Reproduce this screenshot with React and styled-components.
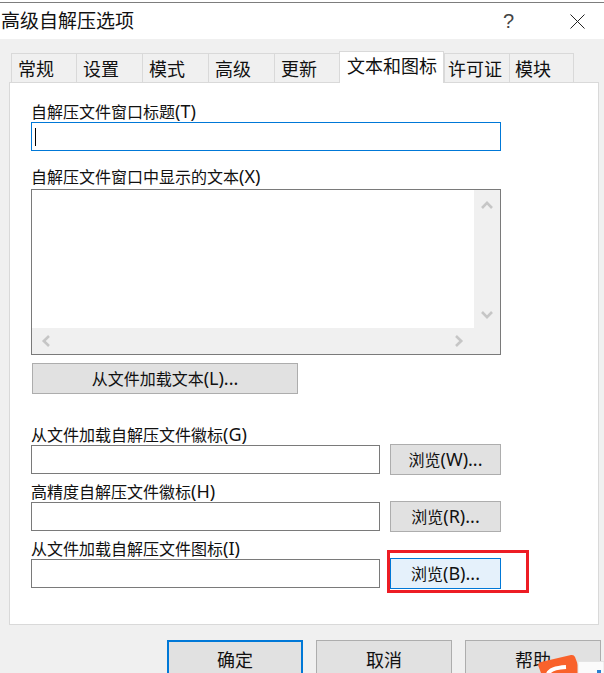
import React from "react";
import styled, { createGlobalStyle } from "styled-components";

const GlobalStyle = createGlobalStyle`
  html, body {
    margin: 0;
    padding: 0;
    background: #f0f0f0;
  }
  * {
    box-sizing: border-box;
  }
`;

const FONT = `"Noto Sans", "Noto Sans CJK SC", sans-serif`;

const Dialog = styled.div`
  position: relative;
  width: 604px;
  height: 673px;
  overflow: hidden;
  background: #f0f0f0;
  font-family: ${FONT};
  color: #111;
`;

const TopEdge = styled.div`
  height: 3px;
  background: #fff;
  border-bottom: 1px solid #7d7d7d;
`;

const TitleBar = styled.div`
  display: flex;
  align-items: center;
  height: 36px;
  padding: 0 19px 0 1px;
  background: #fff;
`;

const Title = styled.div`
  flex: 1;
  font-size: 19px;
  line-height: 36px;
`;

const HelpMark = styled.div`
  width: 67px;
  font-family: "Liberation Sans", sans-serif;
  font-size: 20px;
  line-height: 36px;
  color: #444;
  text-align: left;
`;

const TabStrip = styled.div`
  display: flex;
  align-items: flex-end;
  height: 31px;
  margin: 12px 0 0 11px;
`;

const Tab = styled.div`
  position: relative;
  width: ${(p) => p.$w}px;
  height: ${(p) => (p.$active ? 32 : 29)}px;
  margin-bottom: ${(p) => (p.$active ? -1 : 0)}px;
  padding-left: ${(p) => p.$pad}px;
  border: 1px solid #d9d9d9;
  border-width: 1px 0 0 1px;
  border-right-width: ${(p) => (p.$active || p.$last ? 1 : 0)}px;
  background: ${(p) => (p.$active ? "#fff" : "#f0f0f0")};
  font-size: 18px;
  line-height: ${(p) => (p.$active ? 29 : 31)}px;
  white-space: nowrap;
  z-index: ${(p) => (p.$active ? 1 : 0)};
`;

const Panel = styled.div`
  width: 590px;
  height: 543px;
  margin-left: 9px;
  padding: 19px 0 0 21px;
  background: #fff;
  border: 1px solid #d9d9d9;
`;

const Label = styled.div`
  height: 20px;
  font-size: 16px;
  line-height: 20px;
  white-space: nowrap;
`;

/* latin part of a caption renders larger than the CJK next to it */
const Key = styled.span`
  font-size: 18px;
  line-height: 1;
`;

const FileLabel = styled(Label)`
  height: 26px;
  padding-top: 7px;
  line-height: 19px;
`;

const TextBox = styled.div`
  display: flex;
  align-items: center;
  width: ${(p) => p.$w}px;
  height: 29px;
  padding-left: 3px;
  background: #fff;
  border: 1px solid ${(p) => (p.$focused ? "#0078d7" : "#7a7a7a")};
`;

const Caret = styled.span`
  width: 1px;
  height: 18px;
  background: #000;
`;

const MemoLabel = styled(Label)`
  margin-top: 16px;
  height: 22px;
`;

const Memo = styled.div`
  display: grid;
  grid-template-columns: 1fr 26px;
  grid-template-rows: 1fr 26px;
  width: 470px;
  height: 166px;
  border: 1px solid #7a7a7a;
  background: #fff;
`;

const MemoText = styled.div`
  background: #fff;
`;

const ScrollTrack = styled.div`
  display: flex;
  flex-direction: ${(p) => (p.$vertical ? "column" : "row")};
  justify-content: space-between;
  align-items: center;
  padding: ${(p) => (p.$vertical ? "9px 0 7px" : "0 9px 1px 8px")};
  background: #f0f0f0;
`;

const Corner = styled.div`
  background: #f0f0f0;
`;

const Button = styled.button`
  display: block;
  padding: 0 0 1px;
  font-family: ${FONT};
  font-size: ${(p) => (p.$large ? 18 : 16)}px;
  color: #111;
  background: ${(p) => (p.$hover ? "#e5f1fb" : "#e1e1e1")};
  border: ${(p) => (p.$default ? 2 : 1)}px solid
    ${(p) => (p.$hover || p.$default ? "#0078d7" : "#adadad")};
  border-radius: 0;
  white-space: nowrap;
`;

const LoadButton = styled(Button)`
  width: 266px;
  height: 31px;
  margin: 8px 0 24px 1px;
`;

const BrowseRow = styled.div`
  display: flex;
  align-items: center;
  gap: 10px;
  height: 31px;
`;

const BrowseButton = styled(Button)`
  width: 111px;
  height: 31px;
`;

const BrowseSlot = styled.div`
  position: relative;
`;

const Highlight = styled.div`
  position: absolute;
  left: -3px;
  top: -8px;
  width: 142px;
  height: 43px;
  border: 3px solid #ed1c24;
  pointer-events: none;
`;

const Footer = styled.div`
  display: flex;
  justify-content: flex-end;
  gap: 13px;
  padding: 15px 3px 0 0;
`;

const FooterButton = styled(Button)`
  width: 136px;
  height: 39px;
`;

const ImeBadge = styled.svg`
  position: absolute;
  right: 0;
  bottom: 0;
`;

const ROTATE = { up: 0, right: 90, down: 180, left: 270 };

function Arrow({ dir }) {
  return (
    <svg
      width="12"
      height="12"
      viewBox="0 0 12 12"
      style={{ transform: `rotate(${ROTATE[dir]}deg)` }}
    >
      <path d="M1 9 L6 3.8 L11 9" fill="none" stroke="#c6c6c6" strokeWidth="2.6" />
    </svg>
  );
}

const TABS = [
  { text: "常规", w: 65, pad: 6 },
  { text: "设置", w: 66, pad: 6 },
  { text: "模式", w: 66, pad: 6 },
  { text: "高级", w: 66, pad: 6 },
  { text: "更新", w: 65, pad: 6 },
  { text: "文本和图标", w: 105, pad: 7, active: true },
  { text: "许可证", w: 65, pad: 3 },
  { text: "模块", w: 65, pad: 5, last: true },
];

export default function App() {
  return (
    <>
      <GlobalStyle />
      <Dialog>
        <TopEdge />
        <TitleBar>
          <Title>高级自解压选项</Title>
          <HelpMark>?</HelpMark>
          <svg width="15" height="15" viewBox="0 0 15 15">
            <path d="M0.5 0.5 L14.5 14.5 M14.5 0.5 L0.5 14.5" stroke="#222" strokeWidth="1" />
          </svg>
        </TitleBar>

        <TabStrip>
          {TABS.map((t) => (
            <Tab key={t.text} $w={t.w} $pad={t.pad} $active={t.active} $last={t.last}>
              {t.text}
            </Tab>
          ))}
        </TabStrip>

        <Panel>
          <Label>自解压文件窗口标题<Key>(T)</Key></Label>
          <TextBox $w={470} $focused>
            <Caret />
          </TextBox>

          <MemoLabel>自解压文件窗口中显示的文本<Key>(X)</Key></MemoLabel>
          <Memo>
            <MemoText />
            <ScrollTrack $vertical>
              <Arrow dir="up" />
              <Arrow dir="down" />
            </ScrollTrack>
            <ScrollTrack>
              <Arrow dir="left" />
              <Arrow dir="right" />
            </ScrollTrack>
            <Corner />
          </Memo>

          <LoadButton>从文件加载文本<Key>(L)...</Key></LoadButton>

          <FileLabel>从文件加载自解压文件徽标<Key>(G)</Key></FileLabel>
          <BrowseRow>
            <TextBox $w={349} />
            <BrowseButton>浏览<Key>(W)...</Key></BrowseButton>
          </BrowseRow>

          <FileLabel>高精度自解压文件徽标<Key>(H)</Key></FileLabel>
          <BrowseRow>
            <TextBox $w={349} />
            <BrowseButton>浏览<Key>(R)...</Key></BrowseButton>
          </BrowseRow>

          <FileLabel>从文件加载自解压文件图标<Key>(I)</Key></FileLabel>
          <BrowseRow>
            <TextBox $w={349} />
            <BrowseSlot>
              <BrowseButton $hover>浏览<Key>(B)...</Key></BrowseButton>
              <Highlight />
            </BrowseSlot>
          </BrowseRow>
        </Panel>

        <Footer>
          <FooterButton $large $default>确定</FooterButton>
          <FooterButton $large>取消</FooterButton>
          <FooterButton $large>帮助</FooterButton>
        </Footer>

        <ImeBadge width="70" height="20" viewBox="534 653 70 20">
          <path d="M538 665 Q538 663 541 662 L571 655 Q574 654.5 575 657 L581 673 L541 673 Z" fill="#f9622b" />
          <path d="M548 674 Q550 668 566 667" fill="none" stroke="#fff" strokeWidth="4" />
          <rect x="578" y="661.5" width="26" height="12" fill="#fbfbfb" stroke="#e4e4e4" />
          <rect x="597" y="670" width="4" height="3" fill="#2a7fd0" />
        </ImeBadge>
      </Dialog>
    </>
  );
}
